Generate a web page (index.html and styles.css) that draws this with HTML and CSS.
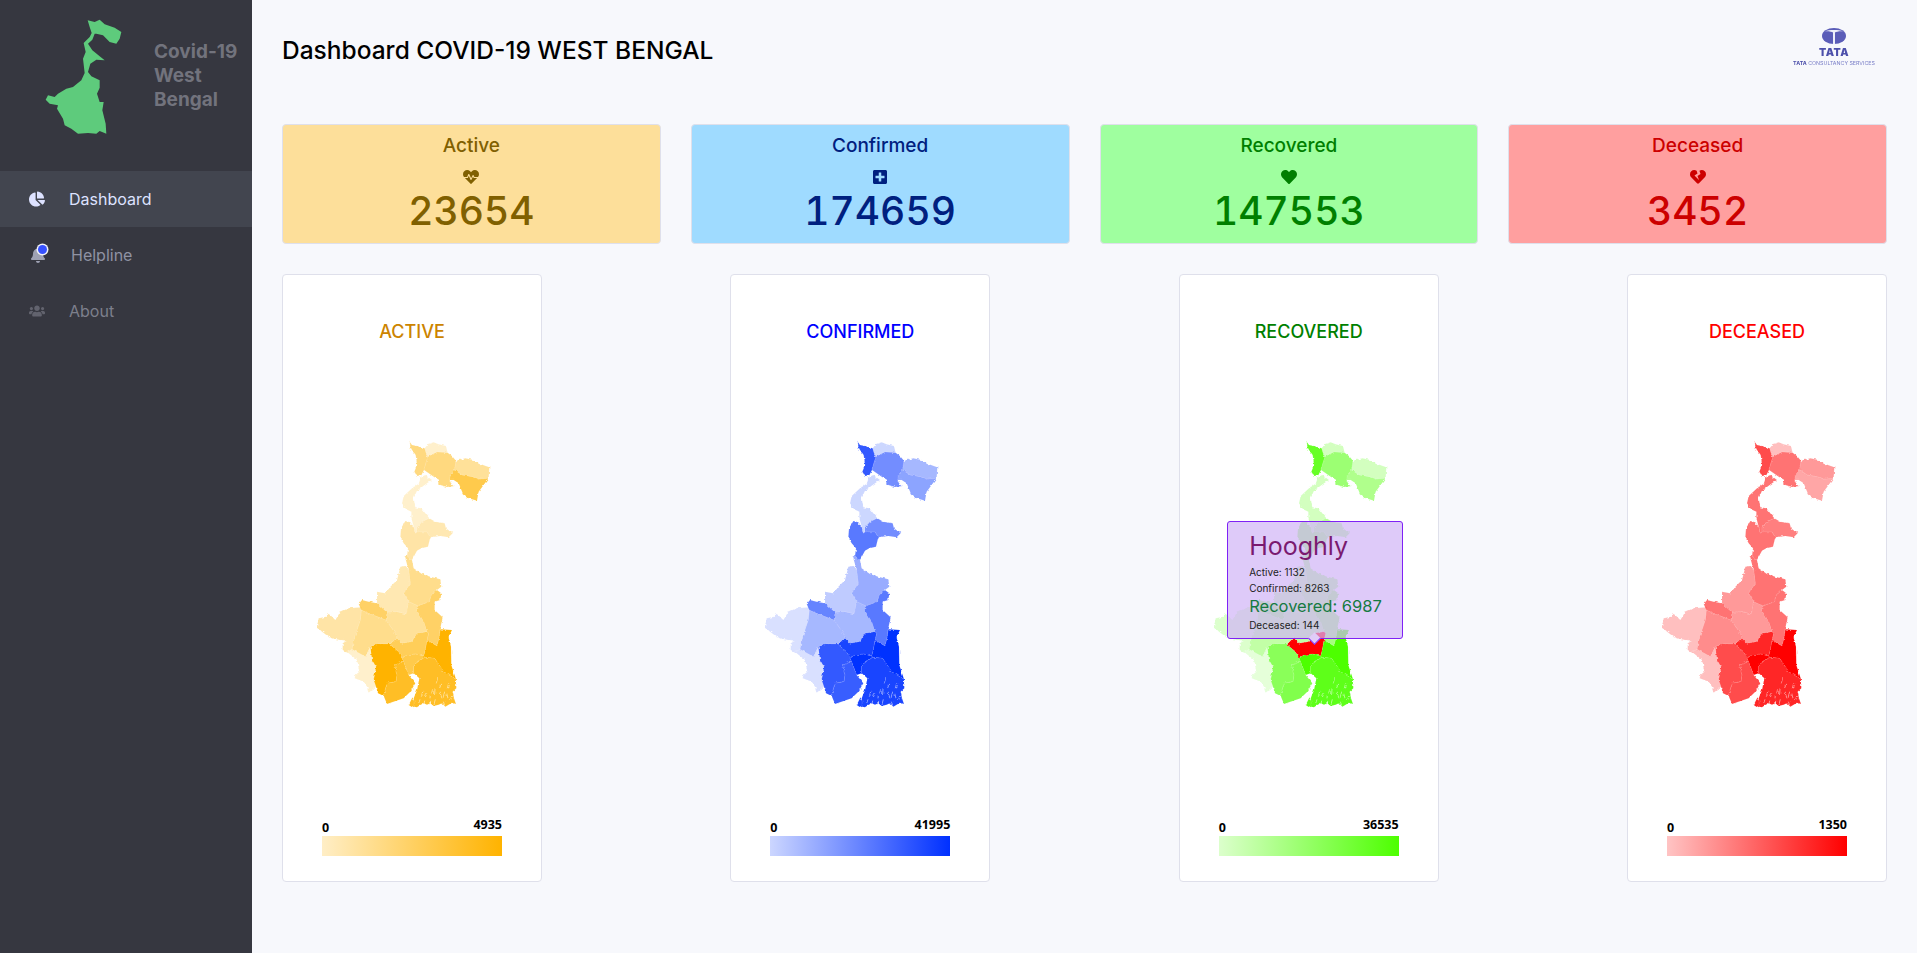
FILE: index.html
```html
<!doctype html>
<html lang="en">
<head>
    <meta charset="UTF-8">
    <title>Covid-19 West Bengal Dashboard</title>
    <link rel="stylesheet" href="styles.css">
</head>
<body>
    <!-- shared district shapes, each map card only changes the shades -->
    <svg class="map-defs" aria-hidden="true">
        <filter id="rough">
            <feTurbulence type="fractalNoise" baseFrequency=".3" numOctaves="2" seed="4"/>
            <feDisplacementMap in="SourceGraphic" scale="3" xChannelSelector="R" yChannelSelector="G"/>
        </filter>
        <symbol id="wb-map" viewBox="0 0 660 900">
            <path class="d d-darjeeling" d="M323 65L330 75L345 78L368 85L372 98L378 110L372 128L366 150L358 166L345 168L337 155L345 135L341 105L330 90L325 80Z"/>
            <path class="d d-kalimpong" d="M368 85L378 72L395 67L410 73L432 78L437 98L420 97L405 96L388 104L378 110L372 98Z"/>
            <path class="d d-jalpaiguri" d="M378 110L388 104L405 96L420 97L437 98L450 108L462 122L458 150L445 165L443 180L447 190L458 198L435 201L415 195L408 190L412 180L395 170L378 158L366 150L372 128Z"/>
            <path class="d d-alipurduar" d="M462 122L490 115L515 120L535 132L562 142L560 175L530 178L510 170L480 165L458 150Z"/>
            <path class="d d-coochbehar" d="M445 165L458 150L480 165L510 170L530 178L560 175L545 195L530 215L525 242L500 235L482 220L470 190L455 180L443 180Z"/>
            <path class="d d-uttar" d="M355 172L370 165L390 180L372 192L345 212L335 235L340 262L358 265L382 295L360 305L345 322L345 336L340 340L335 320L328 295L328 275L312 268L300 250L305 228L330 205L352 190Z"/>
            <path class="d d-dakshin" d="M382 295L400 305L428 310L432 325L452 340L440 352L415 348L385 352L375 336L345 336L345 322L360 305Z"/>
            <path class="d d-malda" d="M310 303L325 307L335 320L340 340L345 336L375 336L385 352L378 380L358 385L345 392L330 420L315 408L318 385L305 370L295 352L297 325Z"/>
            <path class="d d-murshidabad" d="M308 408L315 408L330 420L335 445L360 462L385 470L415 478L418 500L405 510L388 525L382 545L348 558L320 545L305 520L325 490L320 450Z"/>
            <path class="d d-birbhum" d="M295 440L308 438L320 450L325 490L305 520L320 545L318 555L312 582L285 575L255 577L225 550L225 515L250 520L265 500L285 480Z"/>
            <path class="d d-nadia" d="M388 525L405 510L418 520L415 540L398 545L398 570L422 592L415 625L412 650L405 678L375 660L380 640L375 635L365 605L343 570L348 558L382 545Z"/>
            <path class="d d-bardhaman" d="M320 545L348 558L343 570L365 605L375 635L345 640L328 665L300 670L285 655L280 640L252 600L255 577L285 575L312 582L318 555Z"/>
            <path class="d d-bankura" d="M178 570L200 580L252 600L280 640L285 655L275 665L262 672L230 672L205 680L190 710L150 688L158 650L175 600Z"/>
            <path class="d d-purulia" d="M45 620L50 595L72 590L75 580L85 585L100 600L115 575L140 565L178 562L178 570L175 600L158 650L150 688L135 697L122 690L122 670L135 662L100 658L80 650L60 635Z"/>
            <path class="d d-pbardhaman" d="M170 552L180 540L200 545L225 550L255 577L252 600L200 580L178 570Z"/>
            <path class="d d-jhargram" d="M150 688L190 710L205 680L210 720L222 740L215 780L222 800L200 818L195 800L185 785L158 775L160 765L172 755L165 720L140 700L135 697Z"/>
            <path class="d d-pmedinipur" d="M205 680L230 672L262 672L290 695L300 715L305 725L278 735L285 765L282 785L255 790L248 815L245 828L228 820L222 800L215 780L222 740L210 720Z"/>
            <path class="d d-medinipur" d="M278 735L305 725L320 765L340 790L325 815L305 835L255 852L245 828L248 815L255 790L282 785L285 765Z"/>
            <path class="d d-hooghly" d="M262 672L275 665L285 655L300 670L328 665L345 640L375 635L380 640L375 660L370 690L365 708L340 702L315 705L300 715L290 695Z"/>
            <path class="d d-howrah" d="M300 715L315 705L340 702L365 708L368 712L335 735L335 760L320 765L305 725Z"/>
            <path class="d d-north24" d="M375 660L405 678L412 650L415 628L450 630L440 650L447 680L448 735L462 778L425 755L398 715L368 712L365 708L370 690Z"/>
            <path class="d d-south24" d="M335 735L368 712L398 715L425 755L462 778L463 805L452 815L456 835L462 852L450 848L440 854L430 860L420 850L410 854L395 858L385 850L375 854L365 850L355 855L345 862L336 860L335 835L345 810L352 775L335 760ZM320 855L330 835L338 845L335 865Z"/>
            <path class="creeks" d="M407 772L403 790M399 805L398 825M400 838L396 852M416 790L413 805M414 818L420 835M424 845L428 856M440 790L436 805M434 820L438 835M362 815L358 830M354 838L350 850M374 820L370 832M368 842L366 852M385 825L384 835M386 842L385 852M392 808L389 820M428 815L424 830M449 828L446 840"/>
        </symbol>
    </svg>

    <div class="layout">
        <aside class="sidebar">
            <div class="brand">
                <svg class="brand-map" viewBox="130 50 240 360">
                    <path d="M264 60L285 65L300 58L315 72L345 82L365 95L360 115L350 130L330 125L310 105L290 100L285 100L278 118L265 130L278 150L300 168L315 180L290 178L272 190L265 215L275 228L300 240L300 262L292 280L300 305L312 305L308 330L318 370L320 400L300 392L290 400L265 398L235 400L215 385L195 375L190 355L172 325L175 315L150 310L138 298L145 285L165 290L175 280L200 265L220 260L245 240L255 218L250 175L258 155L252 128L270 110L276 98L270 80Z"/>
                </svg>
                <div class="brand-name">Covid-19 West Bengal</div>
            </div>
            <nav class="nav">
                <a class="nav-item active">
                    <svg class="nav-icon" viewBox="0 0 544 512"><path d="M527.79 288H290.5l158.03 158.03c6.04 6.04 15.98 6.53 22.19.68 38.7-36.46 65.32-85.61 73.13-140.86 1.34-9.46-6.51-17.85-16.06-17.85zm-15.83-64.8C503.72 103.74 408.26 8.28 288.8.04 279.68-.59 272 7.1 272 16.24V240h223.77c9.14 0 16.82-7.68 16.19-16.8zM224 288V50.71c0-9.55-8.39-17.4-17.84-16.06C86.99 51.49-4.1 155.6.14 280.37 4.5 408.51 114.83 513.59 243.03 511.98c50.4-.63 96.97-16.87 135.26-44.03 7.9-5.6 8.42-17.23 1.57-24.08L224 288z"/></svg>
                    Dashboard
                </a>
                <a class="nav-item helpline">
                    <span class="bell">
                        <svg class="nav-icon" viewBox="0 0 448 512"><path d="M224 512c35.32 0 63.97-28.65 63.97-64H160.03c0 35.35 28.65 64 63.97 64zm215.39-149.71c-19.32-20.76-55.47-51.99-55.47-154.29 0-77.7-54.48-139.9-127.94-155.16V32c0-17.67-14.32-32-31.98-32s-31.98 14.33-31.98 32v20.84C118.56 68.1 64.08 130.3 64.08 208c0 102.3-36.15 133.53-55.47 154.29-6 6.45-8.66 14.16-8.61 21.71.11 16.4 12.98 32 32.1 32h383.8c19.12 0 32-15.6 32.1-32 .05-7.55-2.61-15.27-8.61-21.71z"/></svg>
                        <span class="bell-dot"></span>
                    </span>
                    Helpline
                </a>
                <a class="nav-item about">
                    <svg class="nav-icon" viewBox="0 0 640 512"><path d="M96 224c35.3 0 64-28.7 64-64s-28.7-64-64-64-64 28.7-64 64 28.7 64 64 64zm448 0c35.3 0 64-28.7 64-64s-28.7-64-64-64-64 28.7-64 64 28.7 64 64 64zm32 32h-64c-17.6 0-33.5 7.1-45.1 18.6 40.3 22.1 68.9 62 75.1 109.4h66c17.7 0 32-14.3 32-32v-32c0-35.3-28.7-64-64-64zm-256 0c61.9 0 112-50.1 112-112S381.9 32 320 32 208 82.1 208 144s50.1 112 112 112zm76.8 32h-8.3c-20.8 10-43.9 16-68.5 16s-47.6-6-68.5-16h-8.3C179.6 288 128 339.6 128 403.2V432c0 26.5 21.5 48 48 48h288c26.5 0 48-21.5 48-48v-28.8c0-63.6-51.6-115.2-115.2-115.2zm-223.7-13.4C161.5 263.1 145.6 256 128 256H64c-35.3 0-64 28.7-64 64v32c0 17.7 14.3 32 32 32h65.9c6.3-47.4 34.9-87.3 75.2-109.4z"/></svg>
                    About
                </a>
            </nav>
        </aside>

        <main class="main">
            <header class="header">
                <h1 class="page-title">Dashboard COVID-19 WEST BENGAL</h1>
                <div class="tcs-logo">
                    <svg class="tcs-globe" viewBox="0 0 24 16">
                        <ellipse cx="12" cy="8" rx="12" ry="8"/>
                        <path class="tcs-t" d="M3 3.2C7 1.6 17 1.6 21 3.2C17 3 14 3.6 13 4.6V16H11V4.6C10 3.6 7 3 3 3.2Z"/>
                    </svg>
                    <div class="tcs-tata">TATA</div>
                    <div class="tcs-sub"><b>TATA</b> CONSULTANCY SERVICES</div>
                </div>
            </header>

            <section class="tiles">
                <div class="tile tile-active">
                    <div class="tile-title">Active</div>
                    <svg class="tile-icon" viewBox="0 0 512 512"><path d="M320.2 243.8l-49.7 99.4c-6 12.1-23.4 11.7-28.9-.6l-56.9-126.3-30 71.7H60.6l182.5 186.5c7.1 7.3 18.6 7.3 25.7 0L451.4 288h-109l-22.2-44.2zM473.7 73.9l-2.4-2.5c-51.5-52.6-135.8-52.6-187.4 0L256 100l-27.9-28.5c-51.5-52.7-135.9-52.7-187.4 0l-2.4 2.4C-10.4 123.6-12.5 202.3 32 256h100.4l35.9-86.2c6.1-14.6 26.6-14.9 33.1-.5l58.4 129.7 49-97.9c5.9-11.8 22.7-11.8 28.6 0l27.6 55.2H480c44.5-53.7 42.4-132.4-6.3-182.1z"/></svg>
                    <div class="tile-count">23654</div>
                </div>
                <div class="tile tile-confirmed">
                    <div class="tile-title">Confirmed</div>
                    <svg class="tile-icon" viewBox="0 0 448 512"><path d="M400 32H48C21.5 32 0 53.5 0 80v352c0 26.5 21.5 48 48 48h352c26.5 0 48-21.5 48-48V80c0-26.5-21.5-48-48-48zm-32 252c0 6.6-5.4 12-12 12h-92v92c0 6.6-5.4 12-12 12h-56c-6.6 0-12-5.4-12-12v-92H92c-6.6 0-12-5.4-12-12v-56c0-6.6 5.4-12 12-12h92v-92c0-6.6 5.4-12 12-12h56c6.6 0 12 5.4 12 12v92h92c6.6 0 12 5.4 12 12v56z"/></svg>
                    <div class="tile-count">174659</div>
                </div>
                <div class="tile tile-recovered">
                    <div class="tile-title">Recovered</div>
                    <svg class="tile-icon" viewBox="0 0 512 512"><path d="M462.3 62.6C407.5 15.9 326 24.3 275.7 76.2L256 96.5l-19.7-20.3C186.1 24.3 104.5 15.9 49.7 62.6c-62.8 53.6-66.1 149.8-9.9 207.9l193.5 199.8c12.5 12.9 32.8 12.9 45.3 0l193.5-199.8c56.3-58.1 53-154.3-9.8-207.9z"/></svg>
                    <div class="tile-count">147553</div>
                </div>
                <div class="tile tile-deceased">
                    <div class="tile-title">Deceased</div>
                    <svg class="tile-icon" viewBox="0 0 512 512"><path d="M473.7 73.8l-2.4-2.5c-46-47.9-118.3-52.9-169.7-15.4L336 159.9l-96 64 48 128-144-144 96-64-28.6-86.5C159.7 19.6 87 24 40.3 71.4l-2.4 2.4C-10.4 123.6-12.5 202.9 31 256.6l193.7 199.9c17.1 17.6 45.3 17.6 62.4 0L481 256.6c43.5-53.7 41.4-133-7.3-182.8z"/></svg>
                    <div class="tile-count">3452</div>
                </div>
            </section>

            <section class="maps">
                <div class="map-card map-active">
                    <h2 class="map-title">ACTIVE</h2>
                    <svg class="map"><use href="#wb-map"/></svg>
                    <div class="legend">
                        <div class="legend-labels"><span>0</span><span class="legend-max">4935</span></div>
                        <div class="legend-bar"></div>
                    </div>
                </div>
                <div class="map-card map-confirmed">
                    <h2 class="map-title">CONFIRMED</h2>
                    <svg class="map"><use href="#wb-map"/></svg>
                    <div class="legend">
                        <div class="legend-labels"><span>0</span><span class="legend-max">41995</span></div>
                        <div class="legend-bar"></div>
                    </div>
                </div>
                <div class="map-card map-recovered">
                    <h2 class="map-title">RECOVERED</h2>
                    <svg class="map"><use href="#wb-map"/></svg>
                    <div class="legend">
                        <div class="legend-labels"><span>0</span><span class="legend-max">36535</span></div>
                        <div class="legend-bar"></div>
                    </div>
                    <div class="map-tooltip">
                        <div class="tip-name">Hooghly</div>
                        <div class="tip-row">Active: 1132</div>
                        <div class="tip-row">Confirmed: 8263</div>
                        <div class="tip-main">Recovered: 6987</div>
                        <div class="tip-row">Deceased: 144</div>
                    </div>
                </div>
                <div class="map-card map-deceased">
                    <h2 class="map-title">DECEASED</h2>
                    <svg class="map"><use href="#wb-map"/></svg>
                    <div class="legend">
                        <div class="legend-labels"><span>0</span><span class="legend-max">1350</span></div>
                        <div class="legend-bar"></div>
                    </div>
                </div>
            </section>
        </main>
    </div>
</body>
</html>
```
FILE: styles.css
```css
* {
    box-sizing: border-box;
}
body {
    font-family: Inter, "Open Sans", sans-serif;
    background-color: #f7f8fc;
    margin: 0;
    padding: 0;
}
.map-defs {
    display: block;
    width: 0;
    height: 0;
}
.layout {
    display: flex;
    min-height: 953px;
}

/* sidebar */
.sidebar {
    width: 252px;
    flex-shrink: 0;
    background-color: #363740;
}
.brand {
    display: flex;
    height: 171px;
    padding: 17px 0 0 43px;
}
.brand-map {
    width: 80px;
    height: 120px;
    fill: #5ecb7c;
}
.brand-name {
    width: 90px;
    margin: 23px 0 0 31px;
    font-size: 19px;
    font-weight: 700;
    line-height: 24px;
    color: #72737d;
}
.nav-item {
    display: flex;
    align-items: center;
    height: 56px;
    padding-left: 29px;
    font-size: 16px;
    color: #8f92a3;
}
.nav-item.active {
    background-color: #42454f;
    color: #dde2ff;
}
.nav-icon {
    width: 16px;
    height: 16px;
    margin-right: 24px;
    fill: #dde2ff;
}
.bell {
    position: relative;
    display: flex;
    margin-left: 1px;
    margin-right: 1px;
}
.helpline .nav-icon {
    fill: #9fa2b4;
}
.bell-dot {
    position: absolute;
    top: -2px;
    left: 8px;
    width: 9px;
    height: 9px;
    border-radius: 50%;
    background-color: #3751ff;
    box-shadow: 0 0 0 1.5px #f0f1f7;
}
.about {
    color: #7d7f8c;
}
.about .nav-icon {
    fill: #62636e;
}

/* main */
.main {
    flex: 1;
    padding: 0 30px;
}
.header {
    display: flex;
    justify-content: space-between;
    height: 124px;
}
.page-title {
    margin: 35px 0 0;
    font-size: 24.5px;
    font-weight: 500;
    line-height: 30px;
    color: #000;
}
.tcs-logo {
    display: flex;
    flex-direction: column;
    align-items: center;
    width: 82px;
    margin: 28px 12px 0 0;
    color: #4d50ab;
    filter: blur(.3px);
}
.tcs-globe {
    width: 24px;
    height: 16px;
    fill: #5b5db8;
}
.tcs-t {
    fill: #eef0fa;
}
.tcs-tata {
    font-size: 10.5px;
    font-weight: 900;
    line-height: 12px;
    margin-top: 3px;
    letter-spacing: .5px;
}
.tcs-sub {
    font-size: 5.3px;
    line-height: 8px;
    white-space: nowrap;
    color: #7c80c8;
}
.tcs-sub b {
    color: #4d50ab;
}

/* number tiles */
.tiles {
    display: grid;
    grid-template-columns: repeat(4, 1fr);
    gap: 30px;
}
.tile {
    display: flex;
    flex-direction: column;
    align-items: center;
    height: 120px;
    padding-top: 8px;
    border: 1px solid #dfe0eb;
    border-radius: 4px;
}
.tile-title {
    font-size: 19px;
    font-weight: 500;
    line-height: 26px;
}
.tile-icon {
    width: 16px;
    height: 16px;
    margin-top: 10px;
    fill: currentColor;
}
.tile-count {
    font-size: 39px;
    font-weight: 500;
    line-height: 50px;
    margin-top: 1px;
    font-variant-numeric: tabular-nums;
}
.tile-active {
    background-color: #fddf9a;
    color: #806000;
}
.tile-confirmed {
    background-color: #9fdbff;
    color: #00207f;
}
.tile-recovered {
    background-color: #9fff9f;
    color: #007f00;
}
.tile-deceased {
    background-color: #ff9f9f;
    color: #cc0000;
}

/* map cards */
.maps {
    display: flex;
    justify-content: space-between;
    margin-top: 30px;
}
.map-card {
    position: relative;
    display: flex;
    flex-direction: column;
    align-items: center;
    width: 260px;
    height: 608px;
    padding-bottom: 25px;
    background: #fff;
    border: 1px solid #dfe0eb;
    border-radius: 4px;
}
.map-title {
    margin: 45px 0 0;
    font-size: 18px;
    font-weight: 500;
    line-height: 24px;
}
.map {
    width: 220px;
    height: 300px;
    margin-top: 76px;
    filter: url(#rough);
}
.legend {
    width: 180px;
    margin-top: auto;
    font-family: "Open Sans", sans-serif;
    font-size: 12.5px;
    font-weight: 700;
    color: #000;
}
.legend-labels {
    display: flex;
    justify-content: space-between;
    align-items: flex-end;
    line-height: 16px;
}
.legend-max {
    padding-bottom: 3px;
}
.legend-bar {
    height: 20px;
}

/* colours of each map */
.d {
    fill: var(--base);
    stroke: #fff;
    stroke-opacity: .25;
    stroke-width: 1;
}
.creeks {
    fill: none;
    stroke: #fff;
    stroke-width: 1.5;
}
.d-darjeeling { fill-opacity: var(--darjeeling); }
.d-kalimpong { fill-opacity: var(--kalimpong); }
.d-jalpaiguri { fill-opacity: var(--jalpaiguri); }
.d-alipurduar { fill-opacity: var(--alipurduar); }
.d-coochbehar { fill-opacity: var(--coochbehar); }
.d-uttar { fill-opacity: var(--uttar); }
.d-dakshin { fill-opacity: var(--dakshin); }
.d-malda { fill-opacity: var(--malda); }
.d-murshidabad { fill-opacity: var(--murshidabad); }
.d-birbhum { fill-opacity: var(--birbhum); }
.d-nadia { fill-opacity: var(--nadia); }
.d-bardhaman { fill-opacity: var(--bardhaman); }
.d-bankura { fill-opacity: var(--bankura); }
.d-purulia { fill-opacity: var(--purulia); }
.d-pbardhaman { fill-opacity: var(--pbardhaman); }
.d-jhargram { fill-opacity: var(--jhargram); }
.d-pmedinipur { fill-opacity: var(--pmedinipur); }
.d-medinipur { fill-opacity: var(--medinipur); }
.d-hooghly { fill: var(--hooghly-fill, var(--base)); fill-opacity: var(--hooghly); }
.d-howrah { fill-opacity: var(--howrah); }
.d-north24 { fill-opacity: var(--north24); }
.d-south24 { fill-opacity: var(--south24); }

.map-active {
    --base: #ffb300;
    --darjeeling: .5; --kalimpong: .2; --jalpaiguri: .5; --alipurduar: .4; --coochbehar: .7;
    --uttar: .2; --dakshin: .3; --malda: .35; --murshidabad: .45; --birbhum: .3; --nadia: .6;
    --bardhaman: .4; --bankura: .45; --purulia: .35; --pbardhaman: .6; --jhargram: .2;
    --pmedinipur: 1; --medinipur: .85; --hooghly: .65; --howrah: .7; --north24: 1; --south24: .85;
}
.map-active .map-title { color: #cc8400; }
.map-active .legend-bar { background: linear-gradient(to right, #ffeec6, #ffb300); }

.map-confirmed {
    --base: #0030ff;
    --darjeeling: .8; --kalimpong: .2; --jalpaiguri: .55; --alipurduar: .35; --coochbehar: .45;
    --uttar: .2; --dakshin: .55; --malda: .65; --murshidabad: .4; --birbhum: .25; --nadia: .65;
    --bardhaman: .35; --bankura: .35; --purulia: .15; --pbardhaman: .6; --jhargram: .15;
    --pmedinipur: .8; --medinipur: .78; --hooghly: .9; --howrah: 1; --north24: 1; --south24: .9;
}
.map-confirmed .map-title { color: #0000ff; }
.map-confirmed .legend-bar { background: linear-gradient(to right, #ccd6ff, #0030ff); }

.map-recovered {
    --base: #4dff00;
    --hooghly-fill: #ff0000;
    --darjeeling: .85; --kalimpong: .25; --jalpaiguri: .55; --alipurduar: .25; --coochbehar: .45;
    --uttar: .25; --dakshin: .4; --malda: .5; --murshidabad: .4; --birbhum: .3; --nadia: .5;
    --bardhaman: .35; --bankura: .35; --purulia: .2; --pbardhaman: .5; --jhargram: .15;
    --pmedinipur: .65; --medinipur: .7; --hooghly: 1; --howrah: 1; --north24: 1; --south24: .9;
}
.map-recovered .map-title { color: #008000; }
.map-recovered .legend-bar { background: linear-gradient(to right, #dcffcc, #4dff00); }

.map-deceased {
    --base: #ff0000;
    --darjeeling: .7; --kalimpong: .25; --jalpaiguri: .55; --alipurduar: .4; --coochbehar: .35;
    --uttar: .55; --dakshin: .5; --malda: .55; --murshidabad: .55; --birbhum: .4; --nadia: .55;
    --bardhaman: .4; --bankura: .45; --purulia: .25; --pbardhaman: .55; --jhargram: .25;
    --pmedinipur: .7; --medinipur: .7; --hooghly: .85; --howrah: 1; --north24: 1; --south24: .85;
}
.map-deceased .map-title { color: #ff0000; }
.map-deceased .legend-bar { background: linear-gradient(to right, #ffc4c4, #ff0000); }

/* tooltip over the recovered map */
.map-tooltip {
    position: absolute;
    top: 246px;
    left: 47px;
    width: 176px;
    height: 118px;
    padding: 6px 0 0 21.5px;
    background: rgba(208, 180, 246, .7);
    border: 1px solid #7f22f5;
    border-radius: 3px;
    color: #222;
}
.map-tooltip::after {
    content: "";
    position: absolute;
    left: 82px;
    bottom: -5px;
    width: 8px;
    height: 8px;
    background: #e0ccf8;
    border-right: 1px solid #7f22f5;
    border-bottom: 1px solid #7f22f5;
    transform: rotate(45deg);
}
.tip-name {
    font-size: 25px;
    line-height: 36px;
    color: #7a1a70;
}
.tip-row {
    font-size: 10px;
    line-height: 16px;
}
.tip-main {
    font-size: 16.5px;
    line-height: 21px;
    color: #167a42;
}
```
